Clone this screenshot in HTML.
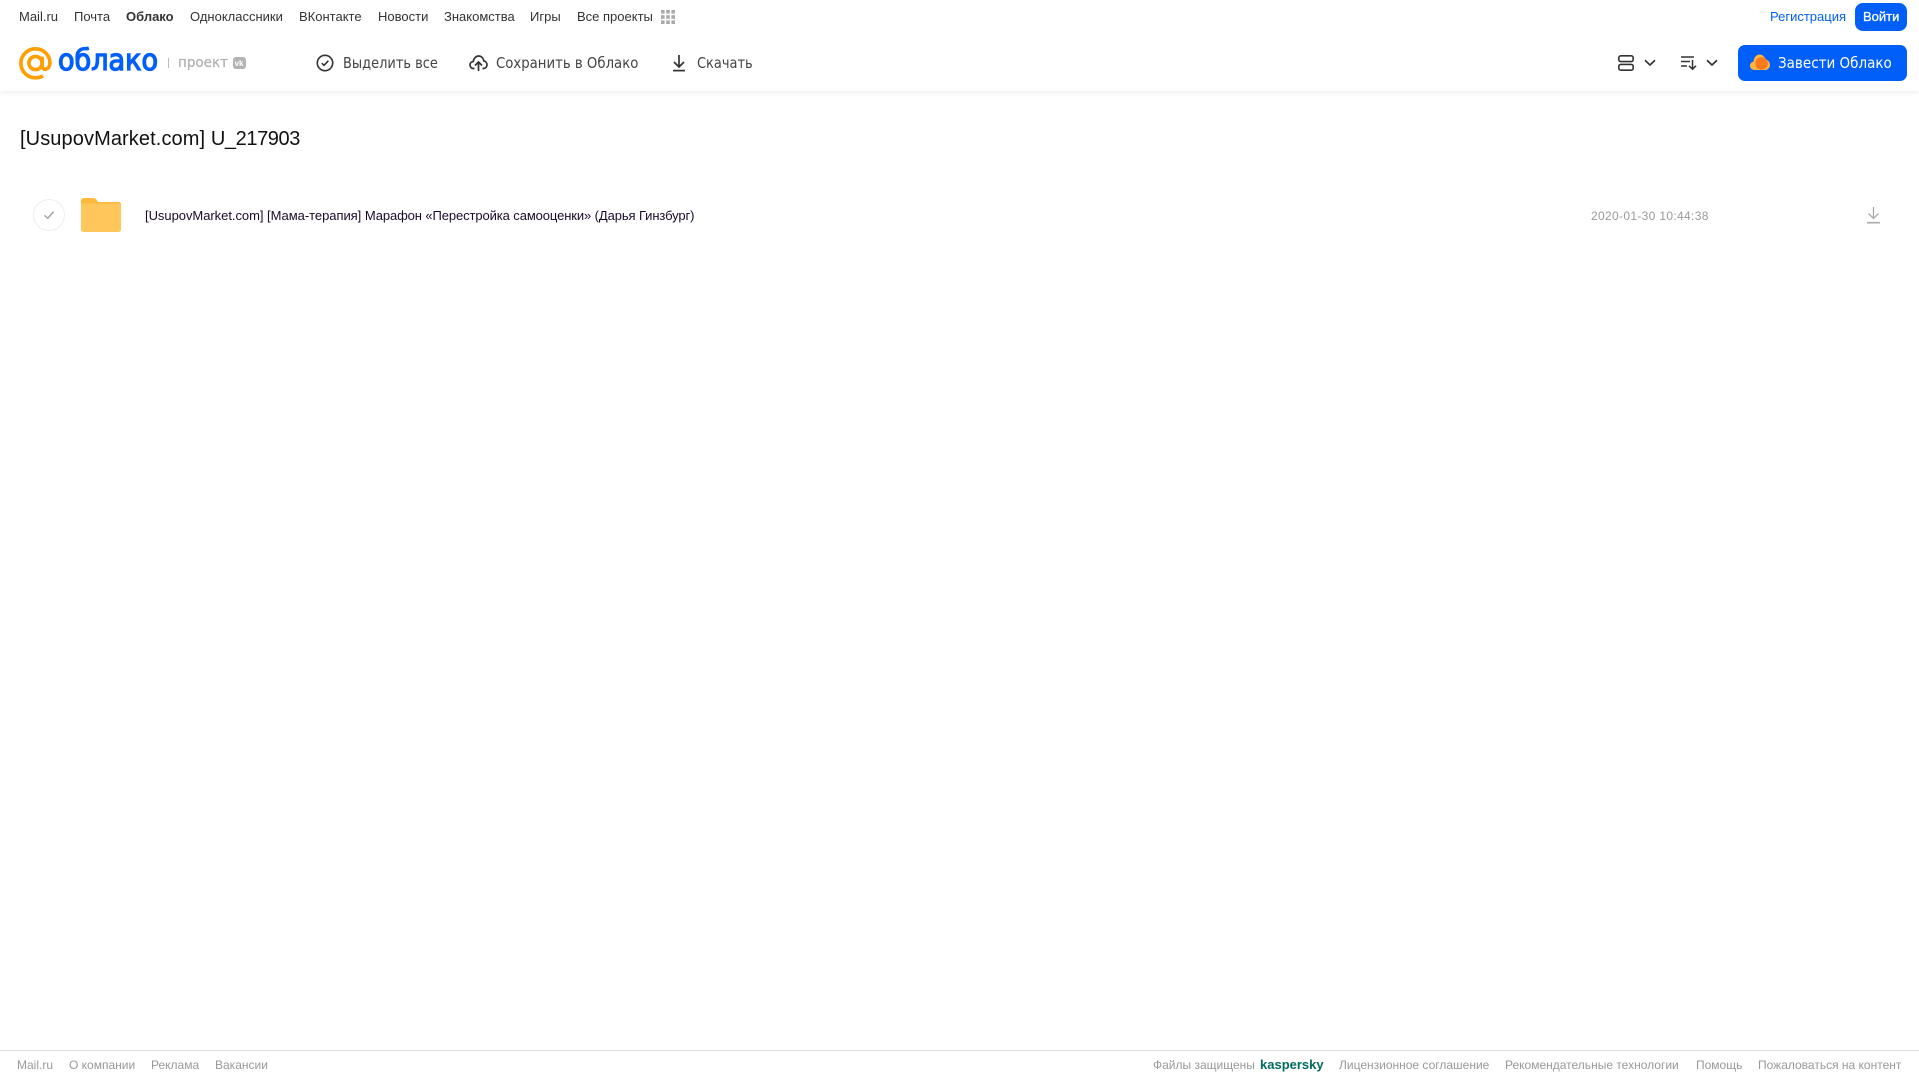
<!DOCTYPE html>
<html lang="ru"><head><meta charset="utf-8"><title>Облако</title>
<style>
html,body{margin:0;padding:0;background:#fff;width:1919px;height:1079px;overflow:hidden}
body{position:relative;font-family:"Liberation Sans",sans-serif}
.t{position:absolute;white-space:nowrap;line-height:20px;height:20px}
.n{top:7px;font-size:13px;color:#333}
.b{top:53px;font-size:15px;color:#444;font-family:"DejaVu Sans","Liberation Sans",sans-serif}
.f{top:1055px;font-size:12px;color:#999}
svg{position:absolute;display:block}
#hdr{position:absolute;left:0;top:0;width:1919px;height:91px;background:#fff;box-shadow:0 1px 6px rgba(0,0,0,.08)}
#btn1{position:absolute;left:1855px;top:3px;width:52px;height:28px;background:#005ff9;border-radius:8px}
#btn2{position:absolute;left:1738px;top:45px;width:169px;height:36px;background:#005ff9;border-radius:7px}
#fl{position:absolute;left:0;top:1050px;width:1919px;height:1px;background:#ddd}
</style></head><body>
<div id="hdr"></div>
<span class="t n" style="left:19px">Mail.ru</span>
<span class="t n" style="left:74px">Почта</span>
<span class="t n" style="left:126px;font-weight:bold">Облако</span>
<span class="t n" style="left:190px">Одноклассники</span>
<span class="t n" style="left:299px">ВКонтакте</span>
<span class="t n" style="left:378px">Новости</span>
<span class="t n" style="left:444px">Знакомства</span>
<span class="t n" style="left:530px">Игры</span>
<span class="t n" style="left:577px">Все проекты</span>
<svg style="left:661px;top:10px" width="14" height="14" viewBox="0 0 14 14" fill="#aaa"><rect x="0" y="0" width="3.6" height="3.6"/><rect x="5.2" y="0" width="3.6" height="3.6"/><rect x="10.4" y="0" width="3.6" height="3.6"/><rect x="0" y="5.2" width="3.6" height="3.6"/><rect x="5.2" y="5.2" width="3.6" height="3.6"/><rect x="10.4" y="5.2" width="3.6" height="3.6"/><rect x="0" y="10.4" width="3.6" height="3.6"/><rect x="5.2" y="10.4" width="3.6" height="3.6"/><rect x="10.4" y="10.4" width="3.6" height="3.6"/></svg>

<svg style="left:19px;top:47px" width="33" height="33" viewBox="0 0 33 33" fill="none" stroke="#ff9e00" stroke-width="3.6"><circle cx="16.5" cy="16" r="6.6"/><path d="M23.1 9.6V18.4C23.1 21.4 25 22.6 26.8 22.2C29.4 21.6 30.9 19.2 30.9 16C30.9 8 24.4 1.8 16.5 1.8C8.4 1.8 1.9 8.2 1.9 16.2C1.9 24.4 8.4 30.8 16.5 30.8C19.4 30.8 22 30 24 28.8"/></svg>
<svg style="left:56px;top:40px" width="106" height="40"><text x="2" y="30" font-family="'DejaVu Sans',sans-serif" font-size="29" fill="#005ff9" stroke="#005ff9" stroke-width="1.3" textLength="100" lengthAdjust="spacingAndGlyphs">облако</text></svg>
<div style="position:absolute;left:168px;top:58px;width:1px;height:10px;background:#bbb"></div>
<svg style="left:176px;top:50px" width="60" height="24"><text x="2" y="17" font-family="'DejaVu Sans',sans-serif" font-size="14" fill="#b3b3b3" stroke="#b3b3b3" stroke-width=".3" textLength="50" lengthAdjust="spacingAndGlyphs">проект</text></svg>
<svg style="left:233px;top:57px" width="13" height="12" viewBox="0 0 13 12"><rect width="13" height="12" rx="3" fill="#b3b3b3"/><text x="1.6" y="9" font-family="'Liberation Sans',sans-serif" font-weight="bold" font-size="8" fill="#fff">vk</text></svg>

<svg style="left:316px;top:54px" width="18" height="18" viewBox="0 0 18 18" fill="none" stroke="#333" stroke-width="1.6"><circle cx="9" cy="9" r="7.7"/><path d="M5.8 9.2L8 11.4L12.3 6.8"/></svg>
<span class="t b" style="left:343px"><span style="display:inline-block;transform-origin:0 50%;transform:scaleX(.865)">Выделить все</span></span>
<svg style="left:469px;top:54px" width="19" height="18" viewBox="0 0 19 18" fill="none" stroke="#333" stroke-width="1.7"><path d="M5.5 14.5H4.6C2.5 14.5 1 12.9 1 11C1 9.1 2.4 7.7 4.2 7.5C4.6 4.5 6.8 2 9.6 2C12.4 2 14.4 4.2 14.9 7C16.7 7.2 18 8.8 18 10.8C18 12.9 16.5 14.5 14.4 14.5H13.5"/><path d="M9.5 17V8.5M6 11.5L9.5 8L13 11.5"/></svg>
<span class="t b" style="left:496px"><span style="display:inline-block;transform-origin:0 50%;transform:scaleX(.885)">Сохранить в Облако</span></span>
<svg style="left:671px;top:54px" width="16" height="18" viewBox="0 0 16 18" fill="none" stroke="#333" stroke-width="1.7"><path d="M8 1V12.5M3 8L8 13L13 8"/><path d="M2 16.6H14"/></svg>
<span class="t b" style="left:697px"><span style="display:inline-block;transform-origin:0 50%;transform:scaleX(.865)">Скачать</span></span>

<span class="t n" style="left:1770px;color:#005ff9">Регистрация</span>
<div id="btn1"></div>
<span class="t n" style="left:1863px;color:#fff;-webkit-text-stroke:.3px #fff">Войти</span>

<svg style="left:1618px;top:55px" width="16" height="16" viewBox="0 0 16 16" fill="none" stroke="#333" stroke-width="1.6"><rect x=".8" y=".8" width="14.4" height="5.8" rx="2"/><rect x=".8" y="9.4" width="14.4" height="5.8" rx="2"/></svg>
<svg style="left:1644px;top:59px" width="12" height="8" viewBox="0 0 12 8" fill="none" stroke="#333" stroke-width="1.7"><path d="M1 1.2L6 6L11 1.2"/></svg>
<svg style="left:1681px;top:55px" width="16" height="16" viewBox="0 0 16 16" fill="none" stroke="#333" stroke-width="1.5"><path d="M0 2H13M0 6.5H9M0 11H6M11.5 5V14M8 10.8L11.5 14.2L15 10.8"/></svg>
<svg style="left:1706px;top:59px" width="12" height="8" viewBox="0 0 12 8" fill="none" stroke="#333" stroke-width="1.7"><path d="M1 1.2L6 6L11 1.2"/></svg>

<div id="btn2"></div>
<svg style="left:1750px;top:54px" width="20" height="17" viewBox="0 0 20 17"><path d="M4.5 16C2 16 0 14.2 0 11.8C0 9.7 1.4 8 3.4 7.6C3.9 3.4 6.4 0.5 9.6 0.5C12.4 0.5 14.6 2.6 15.4 5.4C18 5.8 20 8.2 20 11C20 13.8 17.8 16 15 16Z" fill="#ffb640"/><circle cx="11.6" cy="9.4" r="6.3" fill="#ff7a1f"/></svg>
<span class="t b" style="left:1778px;color:#fff;top:53px"><span style="display:inline-block;transform-origin:0 50%;transform:scaleX(.9)">Завести Облако</span></span>

<span class="t" style="left:20px;top:128px;font-size:20px;line-height:22px;height:22px;color:#111"><span style="letter-spacing:.1px">[UsupovMarket.com] </span><span style="letter-spacing:-.4px">U_217903</span></span>

<svg style="left:33px;top:199px" width="32" height="32" viewBox="0 0 32 32" fill="none"><circle cx="16" cy="16" r="15.5" stroke="#eeeeee"/><path d="M11.5 16.3L14.7 19.3L20.5 12.8" stroke="#a6a6a6" stroke-width="1.5"/></svg>
<svg style="left:81px;top:198px" width="40" height="34" viewBox="0 0 40 34"><path d="M0 3C0 1.3 1.3 0 3 0H12.5C14 0 15 .8 15.8 2L17 4H38C39.1 4 40 4.9 40 6V31C40 32.7 38.7 34 37 34H3C1.3 34 0 32.7 0 31Z" fill="#ffb93a"/><path d="M0 5.5H40V31C40 32.7 38.7 34 37 34H3C1.3 34 0 32.7 0 31Z" fill="#ffc65c"/></svg>
<span class="t" style="left:145px;top:206px;font-size:13px;color:#1a0a2a"><span style="letter-spacing:-.04px">[UsupovMarket.com] [Мама-терапия] </span><span style="letter-spacing:-.104px">Марафон «Перестройка самооценки» (Дарья Гинзбург)</span></span>
<span class="t" style="left:1591px;top:206px;font-size:12px;color:#999;letter-spacing:.33px">2020-01-30 10:44:38</span>
<svg style="left:1867px;top:206px" width="13" height="18" viewBox="0 0 13 18" fill="none" stroke="#aaa" stroke-width="1.3"><path d="M6.5 1V12M1.5 7.5L6.5 12.5L11.5 7.5"/><path d="M0 16.7H13" stroke-width="1.6"/></svg>

<div id="fl"></div>
<span class="t f" style="left:17px">Mail.ru</span>
<span class="t f" style="left:69px">О компании</span>
<span class="t f" style="left:151px">Реклама</span>
<span class="t f" style="left:215px">Вакансии</span>
<span class="t f" style="left:1153px">Файлы защищены</span>
<span class="t f" style="left:1260px;color:#006d5c;font-weight:bold;font-size:13px">kaspersky</span>
<span class="t f" style="left:1339px">Лицензионное соглашение</span>
<span class="t f" style="left:1505px">Рекомендательные технологии</span>
<span class="t f" style="left:1696px">Помощь</span>
<span class="t f" style="left:1758px">Пожаловаться на контент</span>
</body></html>
